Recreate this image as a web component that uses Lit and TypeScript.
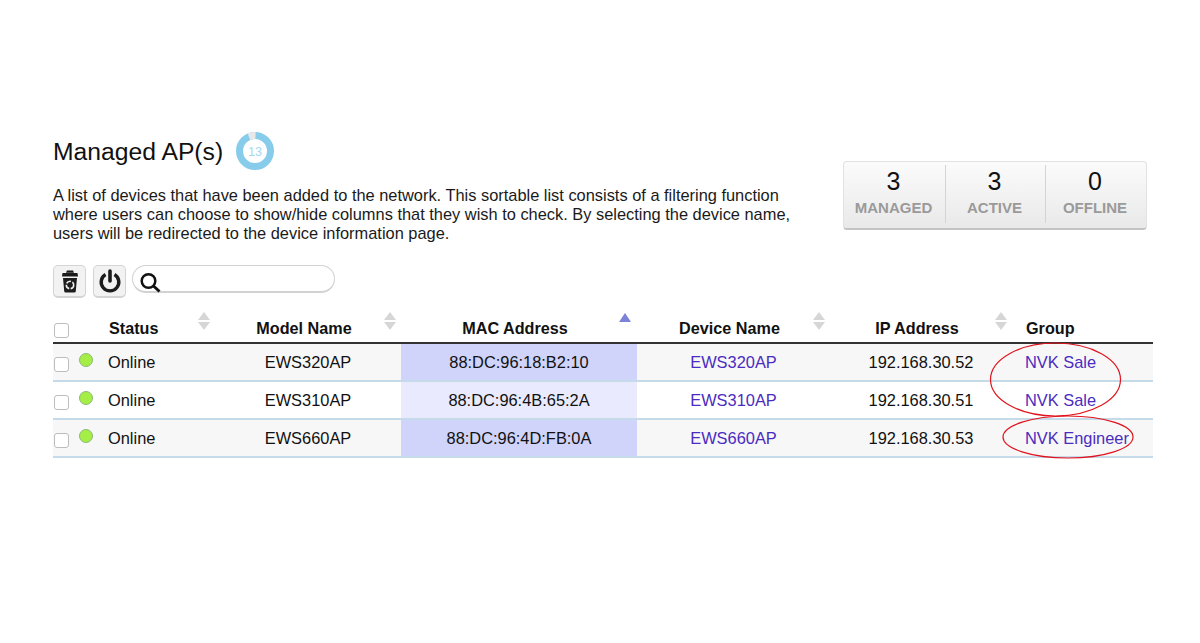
import { LitElement, html, css, svg } from "lit";
import { customElement } from "lit/decorators.js";

const rows = [
  { model: "EWS320AP", mac: "88:DC:96:18:B2:10", ip: "192.168.30.52", group: "NVK Sale" },
  { model: "EWS310AP", mac: "88:DC:96:4B:65:2A", ip: "192.168.30.51", group: "NVK Sale" },
  { model: "EWS660AP", mac: "88:DC:96:4D:FB:0A", ip: "192.168.30.53", group: "NVK Engineer" },
];

const sortArrows = html`<svg class="sort" width="12" height="18" viewBox="0 0 12 18">
  <path d="M6 0 L12 8 L0 8 Z M0 10 L12 10 L6 18 Z" fill="#d6d6d6"></path>
</svg>`;

@customElement("app-root")
export class AppRoot extends LitElement {
  static styles = css`
    :host {
      display: block;
      height: 643px;
      background: #fff;
      font-family: "Liberation Sans", Arial, sans-serif;
      color: #111;
      overflow: hidden;
    }
    .page {
      position: relative;
      width: 1100px;
      margin-left: 53px;
      padding-top: 133px;
    }
    .head {
      display: flex;
      justify-content: space-between;
      align-items: flex-start;
      height: 132px;
    }
    .title {
      display: flex;
      align-items: center;
      gap: 13px;
      height: 36px;
      font-size: 24.7px;
    }
    .title span {
      padding-top: 2px;
    }
    .ring {
      display: block;
    }
    .desc {
      margin: 17px 0 0;
      font-size: 16.4px;
      line-height: 19px;
      color: #1a1a1a;
      white-space: nowrap;
    }
    .stats {
      display: flex;
      box-sizing: border-box;
      width: 304px;
      height: 69px;
      margin: 28px 6px 0 0;
      padding: 3px 0 5px;
      border: 1px solid #e2e2e2;
      border-bottom: 2px solid #c4c4c4;
      border-radius: 4px;
      background: linear-gradient(#fbfbfb, #e9e9e9);
    }
    .stat {
      flex: 1;
      display: flex;
      flex-direction: column;
      align-items: center;
      padding-right: 2px;
      border-left: 1px solid #d4d4d4;
    }
    .stat:first-child {
      border-left: 0;
      flex: 0 0 99px;
    }
    .stat:last-child {
      flex: 0 0 98px;
    }
    .num {
      font-size: 25px;
      line-height: 32px;
      color: #111;
    }
    .lbl {
      font-size: 15px;
      line-height: 20px;
      font-weight: 700;
      color: #9a9a9a;
      margin-top: 1px;
    }
    .tools {
      display: flex;
      gap: 7px;
      height: 35px;
    }
    .btn {
      box-sizing: border-box;
      display: flex;
      align-items: center;
      justify-content: center;
      width: 33px;
      height: 33px;
      border: 1px solid #d4d4d4;
      border-bottom-width: 2px;
      border-radius: 5px;
      background: #f2f2f2;
    }
    .search {
      box-sizing: border-box;
      display: flex;
      align-items: center;
      width: 203px;
      height: 28px;
      margin-left: -1px;
      padding-left: 6px;
      border: 1px solid #d2d2d2;
      border-bottom-width: 2px;
      border-radius: 14px;
      background: #fff;
    }
    .search svg {
      flex: none;
      margin-top: 4px;
      overflow: visible;
    }
    .row {
      display: grid;
      grid-template-columns: 23px 24px 115px 186px 236px 193px 182px 141px;
      align-items: center;
      font-size: 16.4px;
    }
    .header {
      height: 44px;
      box-sizing: border-box;
      border-bottom: 2px solid #333;
      font-weight: 700;
      font-size: 16.2px;
      align-items: end;
      padding-bottom: 4px;
    }
    .cell {
      position: relative;
      text-align: center;
      white-space: nowrap;
    }
    .header .cell {
      padding-right: 8px;
    }
    .header .left {
      padding-right: 0;
    }
    .left {
      text-align: left;
    }
    .status-h {
      padding-left: 9px;
    }
    .group-h {
      padding-left: 14px;
    }
    .status-d {
      padding-left: 8px;
    }
    .group-d {
      padding-left: 13px;
    }
    .sort {
      position: absolute;
      top: -7px;
      right: 5px;
    }
    .up {
      position: absolute;
      top: -6px;
      right: 6px;
      width: 0;
      height: 0;
      border-left: 6px solid transparent;
      border-right: 6px solid transparent;
      border-bottom: 9px solid #7b82d8;
    }
    .data {
      box-sizing: border-box;
      height: 38px;
      border-bottom: 2px solid #c5dbe9;
      align-items: stretch;
    }
    .data .cell {
      display: flex;
      align-items: center;
      justify-content: center;
    }
    .data .left {
      justify-content: flex-start;
    }
    .odd {
      background: #f7f7f7;
    }
    .mac {
      background: #e9eafd;
    }
    .odd .mac {
      background: #d0d3fa;
    }
    .link {
      color: #4a2cc0;
    }
    .box {
      display: block;
      box-sizing: border-box;
      width: 15px;
      height: 15px;
      margin-left: 1px;
      border: 1.5px solid #bdbdbd;
      border-radius: 3px;
      background: #fff;
    }
    .data .box {
      margin: 5px 7px 0 0;
    }
    .dot {
      display: block;
      box-sizing: border-box;
      width: 14px;
      height: 14px;
      margin: -5px 5px 0 0;
      border: 1px solid #8aba7a;
      border-radius: 50%;
      background: #a5ee45;
    }
    .marks {
      position: absolute;
      left: 0;
      top: 0;
      pointer-events: none;
    }
  `;

  render() {
    return html`
      <div class="page">
        <div class="head">
          <div>
            <div class="title">
              <span>Managed AP(s)</span>
              <svg class="ring" width="38" height="38" viewBox="0 0 38 38">
                <circle cx="19" cy="19" r="15.5" fill="none" stroke="#87cdeb" stroke-width="7"></circle>
                <path d="M13 4.700 A15.5 15.5 0 0 1 19.500 3.500" fill="none" stroke="#e8e8e8" stroke-width="7"></path>
                <text x="19" y="23.5" text-anchor="middle" font-size="12.5" fill="#a5d9ef" font-family="Liberation Sans">13</text>
              </svg>
            </div>
            <p class="desc">
              A list of devices that have been added to the network. This sortable list consists of a filtering function<br />
              where users can choose to show/hide columns that they wish to check. By selecting the device name,<br />
              users will be redirected to the device information page.
            </p>
          </div>
          <div class="stats">
            <div class="stat"><span class="num">3</span><span class="lbl">MANAGED</span></div>
            <div class="stat"><span class="num">3</span><span class="lbl">ACTIVE</span></div>
            <div class="stat"><span class="num">0</span><span class="lbl">OFFLINE</span></div>
          </div>
        </div>

        <div class="tools">
          <div class="btn">
            <svg width="18" height="23" viewBox="0 0 18 23">
              <path d="M6 0.500 H12 L13 2.800 H5 Z" fill="#1c1c1c"></path>
              <path d="M1.500 3 H16.500 L17 6.500 H1 Z" fill="#1c1c1c"></path>
              <path d="M2 8 H16 L14.800 21 A1.500 1.500 0 0 1 13.300 22.500 H4.700 A1.500 1.500 0 0 1 3.200 21 Z" fill="#1c1c1c"></path>
              <circle cx="9" cy="15" r="3.700" fill="none" stroke="#eeeeee" stroke-width="1.600" stroke-dasharray="5 1.500"></circle>
            </svg>
          </div>
          <div class="btn">
            <svg width="24" height="24" viewBox="0 0 24 24">
              <path d="M7.500 5.500 A8.800 8.800 0 1 0 16.500 5.500" fill="none" stroke="#1c1c1c" stroke-width="3.400"></path>
              <path d="M12 2 V12" fill="none" stroke="#1c1c1c" stroke-width="3.600" stroke-linecap="round"></path>
            </svg>
          </div>
          <div class="search">
            <svg width="22" height="22" viewBox="0 0 22 22">
              <circle cx="9.500" cy="11" r="6.800" fill="none" stroke="#111" stroke-width="2.500"></circle>
              <path d="M14.500 16 L20.500 21.500" stroke="#111" stroke-width="3" fill="none"></path>
            </svg>
          </div>
        </div>

        <div class="row header">
          <div class="cell"><span class="box"></span></div>
          <div class="cell"></div>
          <div class="cell left status-h">Status${sortArrows}</div>
          <div class="cell">Model Name${sortArrows}</div>
          <div class="cell">MAC Address<span class="up"></span></div>
          <div class="cell">Device Name${sortArrows}</div>
          <div class="cell">IP Address${sortArrows}</div>
          <div class="cell left group-h">Group</div>
        </div>

        ${rows.map(
          (r, i) => html`
            <div class="row data ${i % 2 === 0 ? "odd" : ""}">
              <div class="cell"><span class="box"></span></div>
              <div class="cell"><span class="dot"></span></div>
              <div class="cell left status-d">Online</div>
              <div class="cell">${r.model}</div>
              <div class="cell mac">${r.mac}</div>
              <div class="cell link">${r.model}</div>
              <div class="cell">${r.ip}</div>
              <div class="cell left link group-d">${r.group}</div>
            </div>
          `
        )}

        <svg class="marks" width="1100" height="500" viewBox="0 0 1100 500">
          ${svg`
            <ellipse cx="1002.500" cy="379.500" rx="65" ry="36.500" fill="none" stroke="#e0141e" stroke-width="1.200"></ellipse>
            <ellipse cx="1015" cy="437" rx="65" ry="21" fill="none" stroke="#e0141e" stroke-width="1.200"></ellipse>
          `}
        </svg>
      </div>
    `;
  }
}
